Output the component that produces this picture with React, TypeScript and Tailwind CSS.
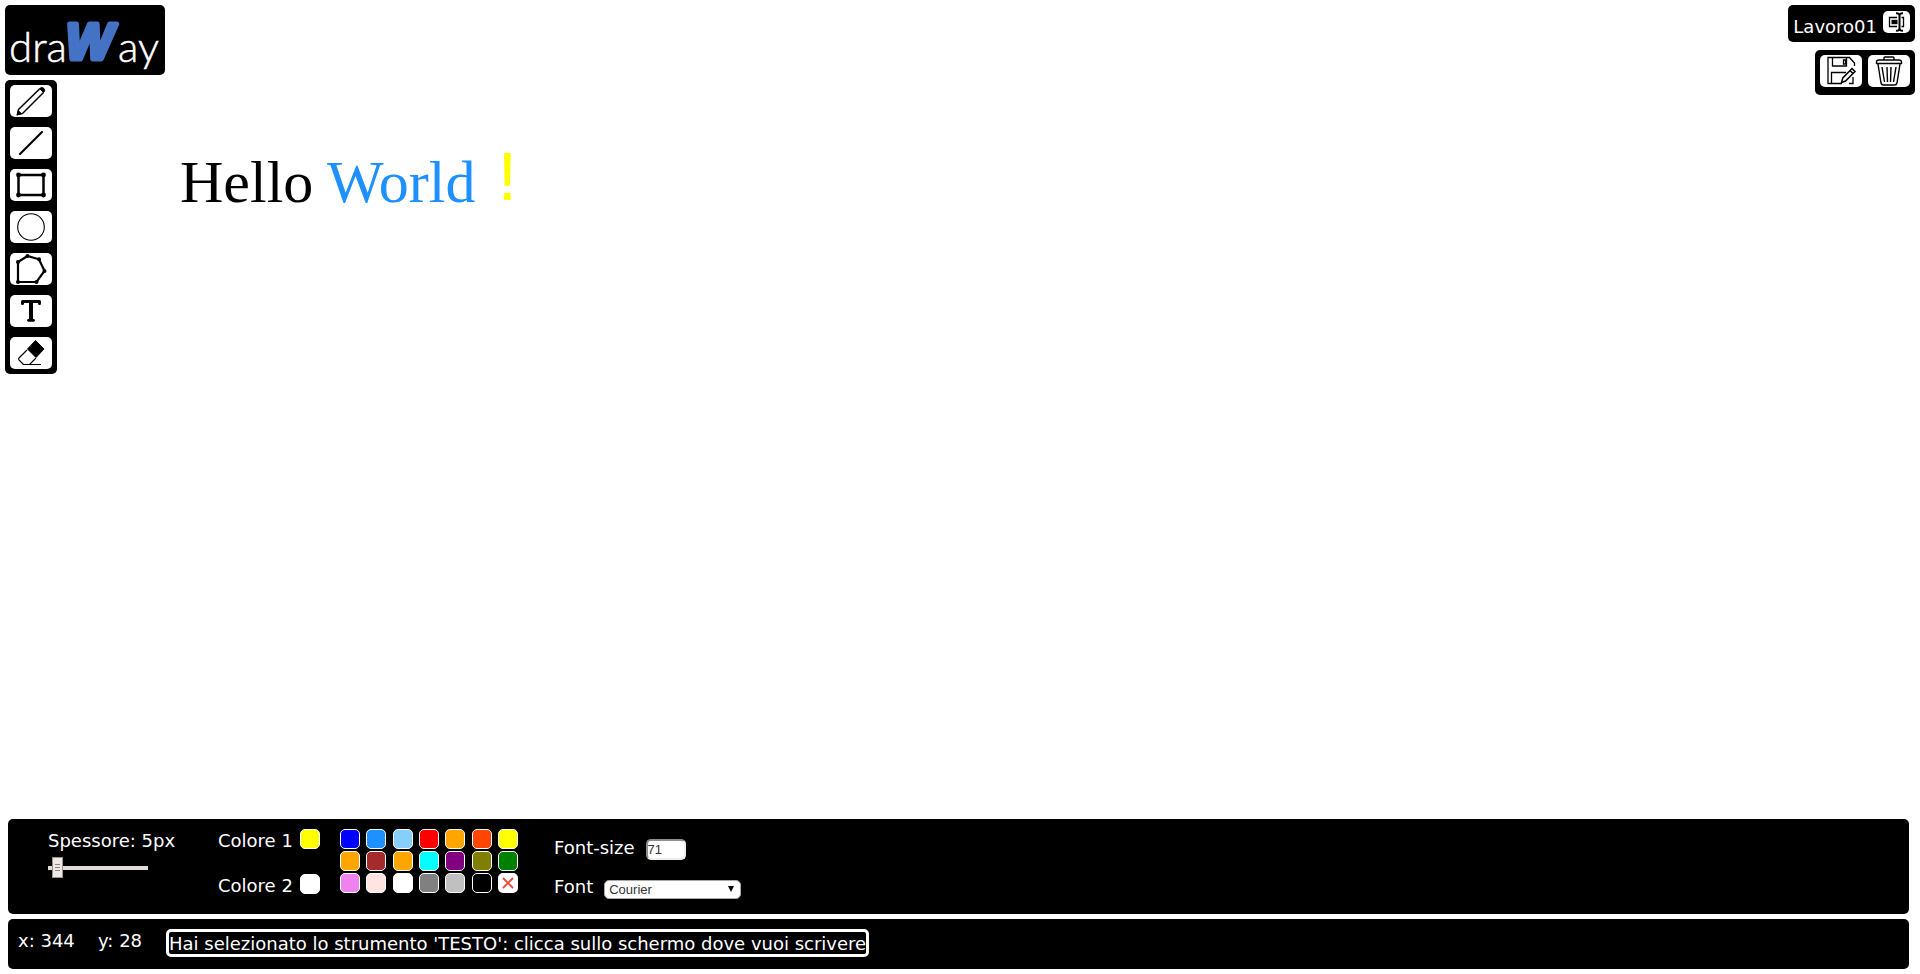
import type { ReactNode } from "react";

type Tool = { name: string; icon: ReactNode };

const tools: Tool[] = [
  {
    name: "Matita",
    icon: (
      <svg viewBox="0 0 42 32" className="h-8 w-full" fill="none" stroke="#000">
        <path d="M8.500 24.500 L29.500 4 M12.500 28.500 L33.500 7.500 M8.500 24.500 L7.500 29.500 L12.500 28.500" strokeWidth="1.500" />
        <path d="M7 30 L8.300 25.800 L11.500 28.500 Z" fill="#000" />
        <path d="M29.500 3.500 Q32 1.500 34 3.500 Q35.500 5.500 33.500 7.500 Z" fill="#000" />
      </svg>
    ),
  },
  {
    name: "Linea",
    icon: (
      <svg viewBox="0 0 42 32" className="h-8 w-full" fill="none" stroke="#000">
        <path d="M10 27 L32 5" strokeWidth="2.100" strokeLinecap="round" />
      </svg>
    ),
  },
  {
    name: "Rettangolo",
    icon: (
      <svg viewBox="0 0 42 32" className="h-8 w-full" fill="none" stroke="#000">
        <rect x="8.500" y="6" width="25" height="20" strokeWidth="2.500" />
        <g fill="#000" stroke="none">
          <circle cx="8.500" cy="6" r="2.400" />
          <circle cx="33.500" cy="6" r="2.400" />
          <circle cx="8.500" cy="26" r="2.400" />
          <circle cx="33.500" cy="26" r="2.400" />
        </g>
      </svg>
    ),
  },
  {
    name: "Cerchio",
    icon: (
      <svg viewBox="0 0 42 32" className="h-8 w-full" fill="none" stroke="#000">
        <circle cx="21" cy="16" r="13.300" strokeWidth="1.100" />
      </svg>
    ),
  },
  {
    name: "Poligono",
    icon: (
      <svg viewBox="0 0 42 32" className="h-8 w-full" fill="none" stroke="#000">
        <path d="M8 9 L17.500 3 L29 6.300 L34.500 18 L26.500 29 L8 29 Z" strokeWidth="2.200" />
        <g fill="#000" stroke="none">
          <circle cx="8" cy="9" r="2" />
          <circle cx="17.500" cy="3" r="2" />
          <circle cx="29" cy="6.300" r="2" />
          <circle cx="34.500" cy="18" r="2" />
          <circle cx="26.500" cy="29" r="2" />
          <circle cx="8" cy="29" r="2" />
        </g>
      </svg>
    ),
  },
  {
    name: "Testo",
    icon: (
      <svg viewBox="0 0 42 32" className="h-8 w-full" fill="none" stroke="#000" strokeLinecap="round">
        <path d="M12.500 8.500 V6.500 H29.500 V8.500" strokeWidth="3" strokeLinejoin="round" />
        <path d="M21 6 V25" strokeWidth="4" strokeLinecap="butt" />
        <path d="M18.500 25.300 H23.500" strokeWidth="2.800" />
      </svg>
    ),
  },
  {
    name: "Gomma",
    icon: (
      <svg viewBox="0 0 42 32" className="h-8 w-full" fill="none" stroke="#000" strokeLinejoin="round">
        <path d="M17 13 L9 21 Q8 22 9 23 L13.500 27.500 H19.500 L26 21 M14 27.500 H31" strokeWidth="1.100" />
        <path d="M25.500 3.500 L34 12 L26 20.500 L17.500 12 Z" fill="#000" strokeWidth="1" />
      </svg>
    ),
  },
];

const palette = [
  { name: "blue", swatch: "bg-[#0000ff]" },
  { name: "dodgerblue", swatch: "bg-[#1e90ff]" },
  { name: "lightskyblue", swatch: "bg-[#87cefa]" },
  { name: "red", swatch: "bg-[#ff0000]" },
  { name: "orange", swatch: "bg-[#ffa500]" },
  { name: "orangered", swatch: "bg-[#ff4500]" },
  { name: "yellow", swatch: "bg-[#ffff00]" },
  { name: "orange", swatch: "bg-[#ffa500]" },
  { name: "brown", swatch: "bg-[#a52a2a]" },
  { name: "orange", swatch: "bg-[#ffa500]" },
  { name: "cyan", swatch: "bg-[#00ffff]" },
  { name: "purple", swatch: "bg-[#800080]" },
  { name: "olive", swatch: "bg-[#808000]" },
  { name: "green", swatch: "bg-[#008000]" },
  { name: "violet", swatch: "bg-[#ee82ee]" },
  { name: "mistyrose", swatch: "bg-[#ffe4e1]" },
  { name: "white", swatch: "bg-white" },
  { name: "gray", swatch: "bg-[#808080]" },
  { name: "silver", swatch: "bg-[#c0c0c0]" },
  { name: "black", swatch: "bg-black" },
];

function Logo() {
  return (
    <a href="#" aria-label="draWay" className="h-[70px] w-40 rounded-[5px] bg-black">
      <svg viewBox="0 0 160 70" className="h-[70px] w-40">
        <g fill="#fff" stroke="#fff" strokeWidth="0.500" fontFamily="Lato, sans-serif" fontWeight="300" fontSize="42">
          <text x="4" y="57">dra</text>
          <text x="113" y="57">ay</text>
        </g>
        <text
          x="61"
          y="54"
          fill="#4472c4"
          stroke="#4472c4"
          strokeWidth="5"
          strokeLinejoin="round"
          fontFamily="'Liberation Sans', sans-serif"
          fontWeight="700"
          fontStyle="italic"
          fontSize="50"
        >
          W
        </text>
      </svg>
    </a>
  );
}

function Toolbar() {
  return (
    <nav aria-label="Strumenti" className="flex flex-col gap-2.5 rounded-[5px] bg-black p-[5px]">
      {tools.map((tool) => (
        <button key={tool.name} type="button" aria-label={tool.name} className="h-8 w-[42px] rounded-[5px] bg-white">
          {tool.icon}
        </button>
      ))}
    </nav>
  );
}

function Project() {
  return (
    <div className="flex flex-col items-end gap-2">
      <div className="flex h-[37px] items-center gap-1.5 rounded-[5px] bg-black px-[5px] text-white">
        <span className="pt-1.5">Lavoro01</span>
        <button type="button" aria-label="Rinomina" className="mb-1 h-[22px] w-[27px] rounded-[5px] bg-white">
          <svg viewBox="0 0 27 22" className="h-[22px] w-full" fill="none" stroke="#000">
            <path d="M14 6.500 H6.500 V15.500 H14 M18.500 6.500 H20.500 V15.500 H18.500" strokeWidth="1.300" />
            <rect x="8.500" y="8.800" width="6" height="4.400" fill="#000" stroke="none" />
            <path d="M13 2.200 Q16.500 2 16.500 5 V17 Q16.500 20 13 19.800 M20 2.200 Q16.500 2 16.500 5 M16.500 17 Q16.500 20 20 19.800" strokeWidth="2" />
          </svg>
        </button>
      </div>
      <div className="flex h-[45px] gap-1.5 rounded-[5px] bg-black p-[5px]">
        <button type="button" aria-label="Salva" className="h-8 w-[42px] rounded-[5px] bg-white">
          <svg viewBox="0 0 42 32" className="h-8 w-full" fill="none" stroke="#000" strokeWidth="1.300">
            <path d="M22 28.500 H8 V2.500 H29.500 L34.500 8 V11 M33 22 V28.500 H29" />
            <path d="M12.500 2.500 V11 H26.500 V2.500 M23.500 5 H25.500 V9 H23.500 Z M11.500 28.500 V17.500 H26" />
            <path d="M32 13.500 L35 16.500 L25.500 26 L21.500 27.500 L22.800 23 Z M30 15.500 L33 18.500" fill="#fff" strokeWidth="1.500" />
          </svg>
        </button>
        <button type="button" aria-label="Elimina" className="h-8 w-[42px] rounded-[5px] bg-white">
          <svg viewBox="0 0 42 32" className="h-8 w-full" fill="none" stroke="#000" strokeWidth="1.400" strokeLinejoin="round">
            <path d="M8.500 8.500 V7 Q8.500 5 11 5 H31 Q33.500 5 33.500 7 V8.500 Z M16 4.500 V3 Q16 2 17 2 H25 Q26 2 26 3 V4.500" />
            <path d="M10 9 L13 28 Q13.500 30 15.500 30 H26.500 Q28.500 30 29 28 L32 9" />
            <path d="M14 12 L16.500 27 M19 12 L19.500 27 M23 12 L22.500 27 M28 12 L25.500 27" />
          </svg>
        </button>
      </div>
    </div>
  );
}

function Canvas() {
  return (
    <main className="pointer-events-none absolute inset-0 font-['Liberation_Serif',serif] text-[60px] leading-none">
      <span className="absolute top-[152px] left-[180px] text-black">Hello</span>
      <span className="absolute top-[152px] left-[327px] text-[#1e90ff]">World</span>
      <span className="absolute top-[146px] left-[486px] font-['Liberation_Mono',monospace] text-[71px] text-[#ffff00]">!</span>
    </main>
  );
}

function Options() {
  return (
    <section aria-label="Opzioni" className="flex h-[95px] rounded-[5px] bg-black text-white">
      <div className="ml-10 flex w-[170px] flex-col pt-[11px]">
        <label htmlFor="spessore" className="leading-[22px]">Spessore: 5px</label>
        <input
          id="spessore"
          type="range"
          min={1}
          max={50}
          defaultValue={3}
          className="mt-[5px] h-[22px] w-[100px] appearance-none bg-transparent [&::-webkit-slider-runnable-track]:h-1 [&::-webkit-slider-runnable-track]:bg-[#e0dbd3] [&::-webkit-slider-thumb]:-mt-[9px] [&::-webkit-slider-thumb]:h-[21px] [&::-webkit-slider-thumb]:w-[11px] [&::-webkit-slider-thumb]:appearance-none [&::-webkit-slider-thumb]:border [&::-webkit-slider-thumb]:border-[#9b8e83] [&::-webkit-slider-thumb]:bg-[#ede9e5] [&::-webkit-slider-thumb]:bg-[linear-gradient(#8d8480_1px,transparent_1px,transparent_3px,#8d8480_3px,#8d8480_4px,transparent_4px,transparent_6px,#8d8480_6px)] [&::-webkit-slider-thumb]:bg-[length:5px_7px] [&::-webkit-slider-thumb]:bg-center [&::-webkit-slider-thumb]:bg-no-repeat"
        />
      </div>
      <div className="flex w-[122px] flex-col gap-[25px] pt-2.5">
        <div className="flex h-5 justify-between pr-5">
          <span id="colore1" className="leading-6">Colore 1</span>
          <button type="button" aria-labelledby="colore1" className="size-5 shrink-0 rounded-[5px] border border-white bg-[#ffff00]" />
        </div>
        <div className="flex h-5 justify-between pr-5">
          <span id="colore2" className="leading-6">Colore 2</span>
          <button type="button" aria-labelledby="colore2" className="size-5 shrink-0 rounded-[5px] border border-white bg-white" />
        </div>
      </div>
      <div className="grid h-fit w-[178px] grid-cols-[repeat(7,20px)] justify-between gap-y-0.5 pt-2.5">
        {palette.map((color, i) => (
          <button key={i} type="button" aria-label={color.name} className={`size-5 rounded-[5px] border border-white ${color.swatch}`} />
        ))}
        <button type="button" aria-label="Nessun colore" className="size-5 rounded-[5px] bg-white">
          <svg viewBox="0 0 20 20" className="size-5" fill="none" stroke="#f44336" strokeWidth="1.800">
            <path d="M5 5 L15 15 M15 5 L5 15" />
          </svg>
        </button>
      </div>
      <div className="ml-9 flex flex-col gap-4 pt-5">
        <div className="flex h-[21px] gap-[11px]">
          <label htmlFor="font-size" className="leading-[18px]">Font-size</label>
          <input
            id="font-size"
            type="text"
            defaultValue="71"
            className="h-[21px] w-10 rounded-[5px] border-2 border-t-[#8e8e8e] border-r-[#eeeeee] border-b-[#eeeeee] border-l-[#8e8e8e] bg-white font-['Liberation_Sans',sans-serif] text-[13px] leading-4 text-[#333333]"
          />
        </div>
        <div className="flex gap-[11px]">
          <label htmlFor="font" className="leading-[22px]">Font</label>
          <span className="relative mt-1 h-[19px]">
            <select
              id="font"
              defaultValue="Courier"
              className="block h-[19px] w-[137px] appearance-none rounded-[5px] border border-[#a9a9a9] bg-white px-1 font-['Liberation_Sans',sans-serif] text-[13px] leading-4 text-[#333333]"
            >
              <option>Courier</option>
              <option>Times New Roman</option>
              <option>Arial</option>
            </select>
            <svg viewBox="0 0 8 6" className="pointer-events-none absolute top-1.5 right-1.5 h-1.5 w-2" fill="#000">
              <path d="M1 0 H7 L4 6 Z" />
            </svg>
          </span>
        </div>
      </div>
    </section>
  );
}

function StatusBar() {
  return (
    <footer className="flex h-[50px] items-start rounded-[5px] bg-black pt-2.5 pl-2.5 text-white">
      <span className="w-20 leading-6">x: 344</span>
      <span className="w-[68px] leading-6">y: 28</span>
      <output className="h-7 rounded-[5px] border-[3px] border-white leading-6 whitespace-nowrap">
        Hai selezionato lo strumento 'TESTO': clicca sullo schermo dove vuoi scrivere
      </output>
    </footer>
  );
}

export default function App() {
  return (
    <div className="relative flex min-h-screen flex-col justify-between bg-white font-['DejaVu_Sans',Verdana,sans-serif] text-lg leading-6">
      <Canvas />
      <header className="flex items-start justify-between p-[5px]">
        <div className="flex flex-col items-start gap-[5px]">
          <Logo />
          <Toolbar />
        </div>
        <Project />
      </header>
      <div className="flex flex-col gap-[5px] pr-[11px] pb-[5px] pl-2">
        <Options />
        <StatusBar />
      </div>
    </div>
  );
}
